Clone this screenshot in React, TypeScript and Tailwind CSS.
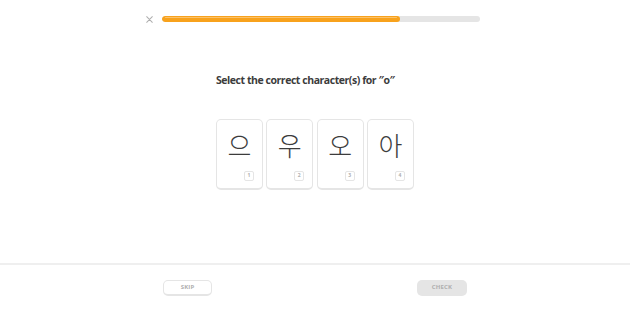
import React from 'react';

const choices = [
  { ch: '으', n: 1 },
  { ch: '우', n: 2 },
  { ch: '오', n: 3 },
  { ch: '아', n: 4 },
];

const ChoiceCard: React.FC<{ ch: string; n: number }> = ({ ch, n }) => (
  <div className="relative w-[47px] h-[71px] rounded-[5px] border border-[#e5e5e5] border-b-2 bg-white flex flex-col items-center">
    <div
      className="mt-[9px] text-[26px] leading-[32px] text-[#3c3c3c] font-light"
      style={{ fontFamily: '"Noto Sans CJK KR", sans-serif' }}
    >
      {ch}
    </div>
    <div className="absolute right-[8px] bottom-[7px] w-[10px] h-[10px] rounded-[2px] border border-[#e5e5e5] flex items-center justify-center text-[5px] text-[#afafaf] font-bold">
      {n}
    </div>
  </div>
);

export default function App() {
  return (
    <div
      className="w-[630px] h-[310px] bg-white flex flex-col"
      style={{ fontFamily: '"Open Sans", sans-serif' }}
    >
      <div className="flex items-center justify-center gap-[9px] pt-[16px] h-[22px]">
        <svg width="7" height="7" viewBox="0 0 10 10" className="ml-[-4px]">
          <path d="M1 1 L9 9 M9 1 L1 9" stroke="#afafaf" strokeWidth="1.5" strokeLinecap="round" />
        </svg>
        <div className="w-[318px] h-[6px] rounded-full bg-[#e5e5e5] overflow-hidden">
          <div className="w-[238px] h-full rounded-full bg-[#f8a21c] flex items-start px-[3px] pt-[1px]">
            <div className="h-[1px] w-full rounded-full bg-[#fbc26b]" />
          </div>
        </div>
      </div>

      <div className="flex justify-center flex-1">
        <div className="w-[198px] flex flex-col">
          <h1 className="mt-[50px] text-[10.5px] leading-[16px] font-bold tracking-[-0.45px] text-[#3c3c3c] whitespace-nowrap">
            Select the correct character(s) for ″o″
          </h1>
          <div className="mt-[31px] flex gap-[3.5px]">
            {choices.map((c) => (
              <ChoiceCard key={c.n} ch={c.ch} n={c.n} />
            ))}
          </div>
        </div>
      </div>

      <div className="h-[47px] border-t-2 border-[#efefef] flex items-center justify-center">
        <div className="w-[304px] flex items-center justify-between">
          <button className="w-[49px] h-[16px] rounded-[5px] border border-[#e5e5e5] border-b-2 bg-white text-[6px] font-bold tracking-wide text-[#afafaf]">
            SKIP
          </button>
          <button className="w-[50px] h-[16px] rounded-[5px] bg-[#e5e5e5] text-[6px] font-bold tracking-wide text-[#afafaf]">
            CHECK
          </button>
        </div>
      </div>
    </div>
  );
}
